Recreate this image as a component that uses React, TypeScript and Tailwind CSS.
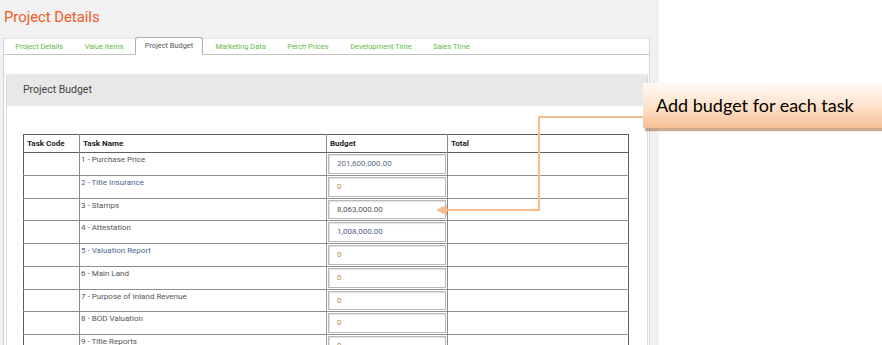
import React from "react";

const tabs = [
  "Project Details",
  "Value Items",
  "Project Budget",
  "Marketing Data",
  "Perch Prices",
  "Development Time",
  "Sales Time",
];

type Row = { name: string; budget: string; nameTone: string; budgetTone: string };

const rows: Row[] = [
  { name: "1 - Purchase Price", budget: "201,600,000.00", nameTone: "text-[#555]", budgetTone: "text-[#5d6b86]" },
  { name: "2 - Title Insurance", budget: "0", nameTone: "text-[#4d6690]", budgetTone: "text-[#b08a55]" },
  { name: "3 - Stamps", budget: "8,063,000.00", nameTone: "text-[#555]", budgetTone: "text-[#555]" },
  { name: "4 - Attestation", budget: "1,008,000.00", nameTone: "text-[#555]", budgetTone: "text-[#4e5d7c]" },
  { name: "5 - Valuation Report", budget: "0", nameTone: "text-[#4d6690]", budgetTone: "text-[#b08a55]" },
  { name: "6 - Main Land", budget: "0", nameTone: "text-[#555]", budgetTone: "text-[#b08a55]" },
  { name: "7 - Purpose of Inland Revenue", budget: "0", nameTone: "text-[#555]", budgetTone: "text-[#b08a55]" },
  { name: "8 - BOD Valuation", budget: "0", nameTone: "text-[#555]", budgetTone: "text-[#b08a55]" },
  { name: "9 - Title Reports", budget: "0", nameTone: "text-[#555]", budgetTone: "text-[#b08a55]" },
];

export default function App() {
  return (
    <div className="relative flex h-[345px] w-[882px] overflow-hidden bg-white font-['Roboto',sans-serif]">
      {/* app screenshot area */}
      <div className="flex h-full w-[659px] shrink-0 flex-col overflow-hidden bg-[#f1f1f1]">
        <h1 className="h-[38px] shrink-0 pl-[4px] pt-[7px] text-[14.8px] leading-[20px] text-[#f15a24]">
          Project Details
        </h1>

        <div className="ml-[3px] mr-[9px] flex min-h-0 flex-1 flex-col border-x border-[#d4d4d4] bg-white">
          {/* tabs */}
          <div className="flex h-[17px] shrink-0 items-end border-b border-t border-[#c4c4c4] border-t-[#e4e4e4] pl-[0.5px]">
            {tabs.map((t) =>
              t === "Project Budget" ? (
                <div
                  key={t}
                  className="-mb-px ml-[0.5px] mr-[1.5px] flex h-[18px] items-center rounded-t-[3px] border border-[#b0b0b0] border-b-white bg-white px-[9px] text-[7.4px] text-[#555]"
                >
                  {t}
                </div>
              ) : (
                <div
                  key={t}
                  className="flex h-full items-center px-[10.8px] text-[7.4px] text-[#62bb3e]"
                >
                  {t}
                </div>
              )
            )}
          </div>

          {/* panel */}
          <div className="ml-[2px] mr-[1px] mt-[19px] flex min-h-0 flex-1 flex-col border-l border-r border-[#dcdcdc]">
            <div className="flex h-[32px] shrink-0 items-center rounded-t-[3px] bg-[#e8e8e8] pl-[16px] text-[10.5px] text-[#444]">
              Project Budget
            </div>

            <div className="pl-[16px] pt-[28px]">
              <table className="w-[605px] table-fixed border-collapse border border-[#5f5f5f] text-[8px]">
                <colgroup>
                  <col className="w-[56px]" />
                  <col className="w-[247px]" />
                  <col className="w-[121px]" />
                  <col className="w-[181px]" />
                </colgroup>
                <thead>
                  <tr className="h-[18px] border-b border-[#5f5f5f] text-left text-[#222]">
                    <th className="border-r border-[#8a8a8a] pl-[3px] font-bold">Task Code</th>
                    <th className="border-r border-[#8a8a8a] pl-[3px] font-bold">Task Name</th>
                    <th className="border-r border-[#8a8a8a] pl-[3px] font-bold">Budget</th>
                    <th className="pl-[3px] font-bold">Total</th>
                  </tr>
                </thead>
                <tbody>
                  {rows.map((r) => (
                    <tr key={r.name} className="h-[22.75px] border-b border-[#8f8f8f]">
                      <td className="border-r border-[#8a8a8a]" />
                      <td className={`border-r border-[#9a9a9a] pl-[1px] pt-[2px] align-top leading-[10px] ${r.nameTone}`}>
                        {r.name}
                      </td>
                      <td className="border-r border-[#8a8a8a] p-0">
                        <div
                          className={`mx-[1px] my-[1px] h-[19.75px] border border-[#b9b9b9] pl-[8px] text-[8px] leading-[18px] shadow-[inset_1px_1px_1px_rgba(0,0,0,0.12)] ${r.budgetTone}`}
                        >
                          {r.budget}
                        </div>
                      </td>
                      <td />
                    </tr>
                  ))}
                </tbody>
              </table>
            </div>
          </div>
        </div>
      </div>

      {/* annotation arrow */}
      <svg
        className="absolute left-[430px] top-[110px]"
        width="220"
        height="110"
        viewBox="0 0 220 110"
      >
        <polyline
          points="215,7 109,7 109,100 17,100"
          fill="none"
          stroke="#f7bd8d"
          strokeWidth="2"
        />
        <polygon points="6,100 17,94.5 17,105.5" fill="#f7bd8d" />
      </svg>

      {/* callout */}
      <div className="absolute left-[643px] top-[83px] flex h-[45px] w-[245px] items-center bg-gradient-to-b from-[#fffaf6] via-[#fde3cc] to-[#f6c097] pl-[13px] font-['Lato',sans-serif] text-[18px] text-black shadow-[2px_3px_1px_rgba(160,100,60,0.55)]">
        Add budget for each task
      </div>
    </div>
  );
}
